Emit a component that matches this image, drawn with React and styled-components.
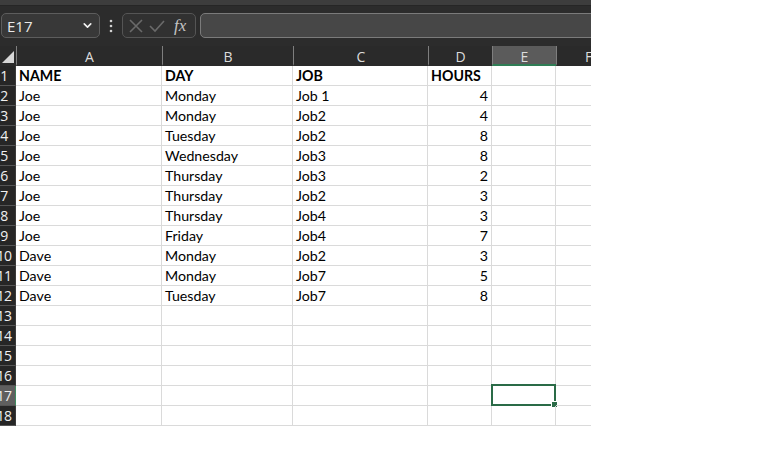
import React from 'react'
import styled, { createGlobalStyle } from 'styled-components'
import { ChevronDown } from 'lucide-react'

const Global = createGlobalStyle`
  body {
    margin: 0;
    background: #ffffff;
  }
`

const Frame = styled.div`
  width: 591px;
  overflow: hidden;
  background: #ffffff;
`

const TopStrip = styled.div`
  height: 5px;
  background: #3d3d3d;
  border-bottom: 1px solid #262626;
`

const Toolbar = styled.div`
  display: flex;
  align-items: flex-start;
  gap: 4px;
  height: 40px;
  padding: 7px 0 0 1px;
  box-sizing: border-box;
  background: #2c2c2c;
`

const NameBox = styled.div`
  display: flex;
  align-items: center;
  justify-content: space-between;
  width: 99px;
  height: 25px;
  box-sizing: border-box;
  padding: 0 5px 0 5px;
  border: 1px solid #5d5d5d;
  border-radius: 5px;
  background: #383838;
  color: #e8e8e8;
  font: 15px "Open Sans", sans-serif;
`

const Dots = styled.div`
  width: 14px;
  height: 25px;
  display: flex;
  align-items: center;
  justify-content: center;
`

const Actions = styled.div`
  display: flex;
  align-items: center;
  gap: 6px;
  width: 74px;
  height: 25px;
  box-sizing: border-box;
  padding: 0 4px 0 6px;
  border: 1px solid #555;
  border-radius: 5px;
  background: #313131;
`

const Fx = styled.span`
  margin-left: 3px;
  color: #c4c4c4;
  font: italic 17px "Liberation Serif", serif;
  line-height: 1;
`

const Input = styled.div`
  flex: 1;
  height: 25px;
  margin-right: -10px;
  box-sizing: border-box;
  border: 1px solid #7b7b7b;
  border-radius: 5px;
  background: #474747;
`

const Sheet = styled.div`
  display: grid;
  grid-template-columns: 24px 146px 131px 135px 64px 64px 64px;
  grid-auto-rows: 20px;
  margin-left: -8px;
  width: 628px;
`

const ColHead = styled.div`
  display: flex;
  align-items: center;
  justify-content: center;
  box-sizing: border-box;
  background: ${p => (p.$active ? '#5b5b5b' : '#2a2a2a')};
  border-left: 1px solid #7e7e7e;
  border-bottom: 2px solid ${p => (p.$active ? '#2f7d55' : '#2a2a2a')};
  color: #dcdcdc;
  font: 14px "Open Sans", sans-serif;
  padding-top: 2px;
`

const Corner = styled.div`
  position: relative;
  background: #2a2a2a;
  border-bottom: 2px solid #2a2a2a;
  box-sizing: border-box;
`

const Triangle = styled.div`
  position: absolute;
  right: 2px;
  bottom: 1px;
  width: 0;
  height: 0;
  border-left: 12px solid transparent;
  border-bottom: 12px solid #d6d6d6;
`

const RowHead = styled.div`
  display: flex;
  align-items: center;
  justify-content: center;
  padding-left: 1px;
  box-sizing: border-box;
  background: ${p => (p.$active ? '#5f5f5f' : '#262626')};
  border-right: 1px solid ${p => (p.$active ? '#3f8c5f' : '#3a3a3a')};
  border-bottom: 1px solid #555;
  color: #f0f0f0;
  font: 14px "Open Sans", sans-serif;
  letter-spacing: -0.6px;
`

const Cell = styled.div`
  position: relative;
  display: flex;
  align-items: center;
  justify-content: ${p => (p.$num ? 'flex-end' : 'flex-start')};
  padding: 0 3px;
  box-sizing: border-box;
  border-right: 1px solid #dadada;
  border-bottom: 1px solid #dadada;
  color: #000;
  font: ${p => (p.$bold ? 700 : 400)} 14.2px Lato, "Liberation Sans", sans-serif;
  white-space: nowrap;
`

const Selection = styled.div`
  position: absolute;
  left: -1px;
  top: -2px;
  right: -1px;
  bottom: -1px;
  border: 2px solid #2a6b47;
  pointer-events: none;
`

const Handle = styled.div`
  position: absolute;
  right: -4px;
  bottom: -4px;
  width: 5px;
  height: 5px;
  background: #2a6b47;
  border: 1px solid #fff;
`

const columns = ['A', 'B', 'C', 'D', 'E', 'F']

const rows = [
  ['NAME', 'DAY', 'JOB', 'HOURS'],
  ['Joe', 'Monday', 'Job 1', 4],
  ['Joe', 'Monday', 'Job2', 4],
  ['Joe', 'Tuesday', 'Job2', 8],
  ['Joe', 'Wednesday', 'Job3', 8],
  ['Joe', 'Thursday', 'Job3', 2],
  ['Joe', 'Thursday', 'Job2', 3],
  ['Joe', 'Thursday', 'Job4', 3],
  ['Joe', 'Friday', 'Job4', 7],
  ['Dave', 'Monday', 'Job2', 3],
  ['Dave', 'Monday', 'Job7', 5],
  ['Dave', 'Tuesday', 'Job7', 8],
]

export default function App() {
  const body = []
  for (let r = 1; r <= 18; r++) {
    const data = rows[r - 1] || []
    body.push(
      <RowHead key={'h' + r} $active={r === 17}>{r}</RowHead>
    )
    columns.forEach((c, i) => {
      const v = data[i]
      body.push(
        <Cell key={c + r} $bold={r === 1} $num={typeof v === 'number'}>
          {v}
          {r === 17 && c === 'E' && (
            <Selection>
              <Handle />
            </Selection>
          )}
        </Cell>
      )
    })
  }

  return (
    <Frame>
      <Global />
      <TopStrip />
      <Toolbar>
        <NameBox>
          <span>E17</span>
          <ChevronDown size={13} strokeWidth={3} color="#f2f2f2" />
        </NameBox>
        <Dots>
          <svg width="4" height="14" viewBox="0 0 4 14">
            <circle cx="2" cy="2" r="1.3" fill="#d0d0d0" />
            <circle cx="2" cy="7" r="1.3" fill="#d0d0d0" />
            <circle cx="2" cy="12" r="1.3" fill="#d0d0d0" />
          </svg>
        </Dots>
        <Actions>
          <svg width="14" height="14" viewBox="0 0 14 14">
            <path d="M1 1 L13 13 M13 1 L1 13" stroke="#6a6a6a" strokeWidth="1.6" fill="none" />
          </svg>
          <svg width="16" height="14" viewBox="0 0 16 14">
            <path d="M1 7 L6 12 L15 2" stroke="#6a6a6a" strokeWidth="1.6" fill="none" />
          </svg>
          <Fx>fx</Fx>
        </Actions>
        <Input />
      </Toolbar>
      <Sheet>
        <Corner>
          <Triangle />
        </Corner>
        {columns.map(c => (
          <ColHead key={c} $active={c === 'E'}>{c}</ColHead>
        ))}
        {body}
      </Sheet>
    </Frame>
  )
}
